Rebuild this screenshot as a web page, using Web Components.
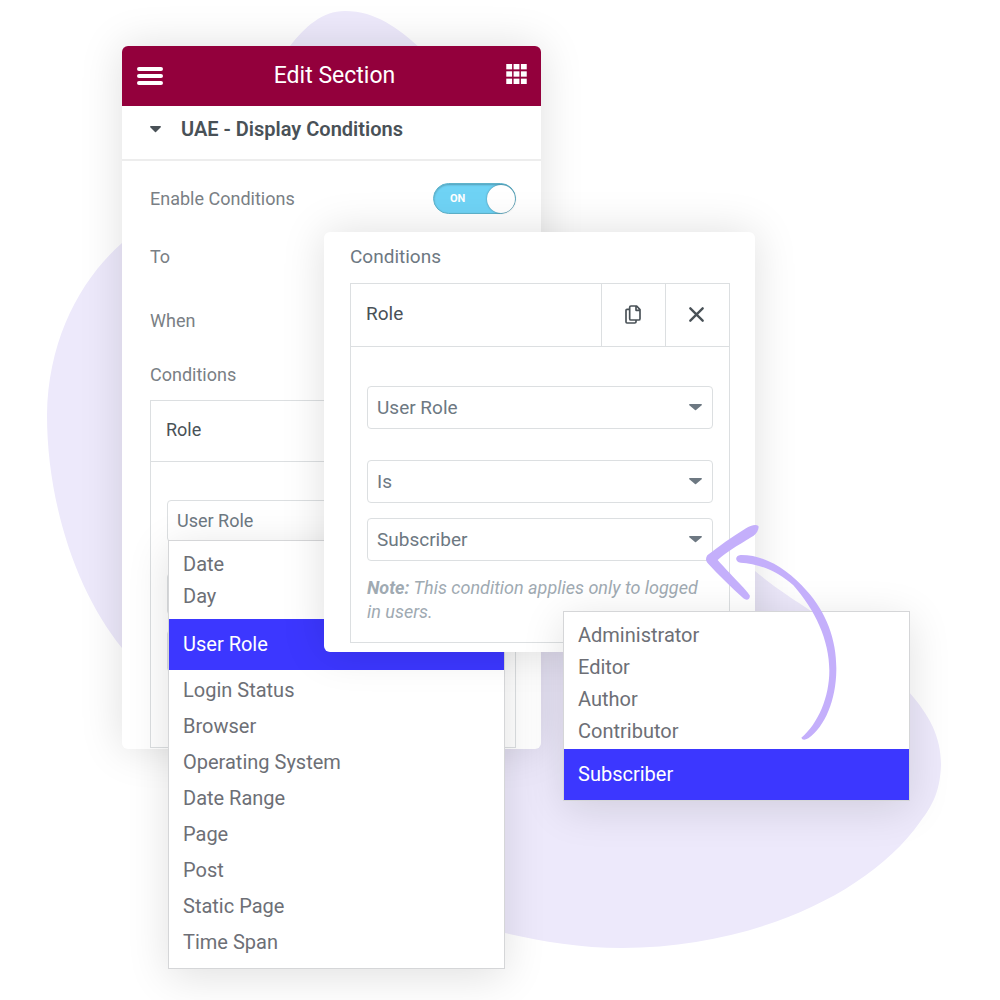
<!DOCTYPE html>
<html lang="en">
<head>
<meta charset="utf-8">
<meta name="viewport" content="width=device-width, initial-scale=1">
<title>Display Conditions</title>
<style>
    body {
        margin: 0;
        background: #fff;
        font-family: Roboto, "Liberation Sans", sans-serif;
        font-size: 19px;
        line-height: 24px;
        color: #6d7882;
    }
    .editor {
        margin-left: 12.2%;
        width: 41.9%;
        --text-size: 18px;
    }
    .editor condition-box {
        --head-height: 60px;
        --body-start: 38px;
        --body-end: 75px;
    }
    .editor select-field {
        --field-height: 42px;
    }
    .detail {
        left: 32.4%;
        top: 232px;
        width: 43.1%;
    }
    .types {
        left: 16.8%;
        top: 540px;
        width: 33.7%;
    }
    .roles {
        left: 56.3%;
        top: 611px;
        width: 34.7%;
    }
    /* windows laid over the editor panel */
    .detail, .types, .roles {
        position: absolute;
    }
</style>
</head>
<body>

<canvas-stage>
    <editor-panel class="editor" heading="Edit Section" section="UAE - Display Conditions">
        <toggle-row label="Enable Conditions" on></toggle-row>
        <setting-label class="to">To</setting-label>
        <setting-label class="when">When</setting-label>
        <setting-label class="conditions">Conditions</setting-label>
        <condition-box heading="Role">
            <select-field label="Condition" value="User Role"></select-field>
            <select-field class="spaced" label="Operator"></select-field>
            <select-field label="Role"></select-field>
        </condition-box>
    </editor-panel>

    <option-menu class="types" label="Condition type">
        <menu-option compact>Date</menu-option>
        <menu-option compact>Day</menu-option>
        <menu-option selected>User Role</menu-option>
        <menu-option>Login Status</menu-option>
        <menu-option>Browser</menu-option>
        <menu-option>Operating System</menu-option>
        <menu-option>Date Range</menu-option>
        <menu-option>Page</menu-option>
        <menu-option>Post</menu-option>
        <menu-option>Static Page</menu-option>
        <menu-option>Time Span</menu-option>
    </option-menu>

    <detail-card class="detail" heading="Conditions">
        <condition-box heading="Role" actions>
            <select-field label="Condition" value="User Role"></select-field>
            <select-field class="spaced" label="Operator" value="Is"></select-field>
            <select-field label="Role" value="Subscriber"></select-field>
            <note-text><b>Note:</b> This condition applies only to logged in users.</note-text>
        </condition-box>
    </detail-card>

    <option-menu class="roles" label="User role">
        <menu-option compact>Administrator</menu-option>
        <menu-option compact>Editor</menu-option>
        <menu-option compact>Author</menu-option>
        <menu-option compact>Contributor</menu-option>
        <menu-option selected>Subscriber</menu-option>
    </option-menu>
</canvas-stage>

<script>
class BaseElement extends HTMLElement {
    constructor() {
        super();
        this.attachShadow({ mode: 'open' });
    }

    connectedCallback() {
        const template = document.createElement('template');
        template.innerHTML = `<style>*{box-sizing:border-box}${this.constructor.style}</style>${this.html}`;
        this.shadowRoot.replaceChildren(template.content.cloneNode(true));
    }

    attr(name) {
        return this.getAttribute(name) || '';
    }
}

class CanvasStage extends BaseElement {
    get html() {
        return `
            <svg class="blob" viewBox="0 0 1000 1000" aria-hidden="true">
                <path fill="#ede9fb" d="M345 11C376 11 399 29 419 47C510 125 480 300 540 400C600 470 700 525 755 571C775 588 793 599 811 611C850 636 884 664 909 692C930 716 941 737 941 765C940 791 933 805 920 822C870 893 755 947 622 948C580 948 540 941 505 933C390 900 260 780 180 700C160 684 140 668 122 648C75 590 47 500 47 415C48 340 80 280 122 243C200 180 255 100 290 46C305 27 322 11 345 11Z"/>
            </svg>
            <slot></slot>
            <svg class="arrow" viewBox="495 72 396 654" fill="#c4affb" aria-hidden="true">
                <path d="M655 78C648 72 630 77 618 85C575 112 535 140 502 166Q494 178 502 188C535 225 575 262 610 295C620 303 632 298 629 286C620 270 570 222 533 180C560 155 620 120 640 108C652 100 658 84 655 78Z"/>
                <path d="M602 165C675 164 745 210 800 272C860 338 890 420 889 510C888 600 855 680 805 715Q788 724 784 713C835 670 868 590 868 512C868 420 825 330 760 256C715 215 655 190 602 188C584 186 584 166 602 165Z"/>
            </svg>
        `;
    }

    static style = `
        :host {
            display: block;
            position: relative;
            box-sizing: border-box;
            min-height: 1000px;
            padding-top: 46px;
            overflow: hidden;
        }
        svg { position: absolute; display: block; }
        .blob { left: 0; top: 0; width: 100%; }
        .arrow { left: 70.5%; top: 524px; width: 13.2%; }
    `;
}

class EditorPanel extends BaseElement {
    get html() {
        const steps = [0, 15, 30];
        const cells = steps.map(y => steps.map(x => `<path d="M${x} ${y}h12v11h-12z"/>`).join('')).join('');
        return `
            <header>
                <button aria-label="Menu">
                    <svg width="26" height="18" viewBox="0 0 26 18" fill="none" stroke="#fff" stroke-width="4" stroke-linecap="round">
                        <path d="M2 2H24M2 9H24M2 16H24"/>
                    </svg>
                </button>
                <h1>${this.attr('heading')}</h1>
                <button class="grid" aria-label="Widgets">
                    <svg width="21" height="20" viewBox="0 0 42 41" fill="#fff">${cells}</svg>
                </button>
            </header>
            <h2>
                <button aria-expanded="true">
                    <svg width="11" height="7" viewBox="0 0 11 7"><path fill="#495157" d="M1 0H10Q11 0 11 1L6 6Q5.500 6.500 5 6L0 1Q0 0 1 0Z"/></svg>
                    ${this.attr('section')}
                </button>
            </h2>
            <div class="controls"><slot></slot></div>
        `;
    }

    static style = `
        :host {
            display: block;
            position: relative;
            border-radius: 6px;
            background: #fff;
            box-shadow: 0 0 44px rgba(0, 0, 0, .13);
        }
        header {
            display: flex;
            align-items: center;
            justify-content: space-between;
            height: 60px;
            padding: 0 14px 0 15px;
            border-radius: 6px 6px 0 0;
            background: #93003c;
            color: #fff;
        }
        h1, h2 { margin: 0; }
        h1 { font-size: 23px; line-height: 28px; font-weight: 400; }
        h2 {
            padding: 11px 28px 18px;
            border-bottom: 2px solid #ededed;
        }
        button {
            display: flex;
            align-items: center;
            padding: 0;
            border: 0;
            background: none;
            color: #495157;
            font: 600 20px/24px Roboto, "Liberation Sans", sans-serif;
            cursor: pointer;
        }
        h2 button { gap: 20px; }
        header .grid { padding-bottom: 4px; }
        .controls {
            display: flex;
            flex-direction: column;
            padding: 22px 25px 1px 28px;
        }
        ::slotted(.to) { margin-top: 31px; }
        ::slotted(.when) { margin-top: 40px; }
        ::slotted(.conditions) { margin: 30px 0 13px; }
    `;
}

class SettingLabel extends BaseElement {
    get html() {
        return `<slot></slot>`;
    }

    static style = `
        :host { display: block; color: #7a7f85; font-size: var(--text-size, 19px); }
    `;
}

class ToggleRow extends BaseElement {
    get html() {
        return `
            <label for="toggle">${this.attr('label')}</label>
            <div class="track">
                <input id="toggle" type="checkbox" role="switch" ${this.hasAttribute('on') ? 'checked' : ''}>
                <span class="state">ON</span>
                <span class="knob"></span>
            </div>
        `;
    }

    static style = `
        :host {
            display: flex;
            align-items: center;
            justify-content: space-between;
            color: #7a7f85;
            font-size: var(--text-size, 19px);
        }
        .track {
            display: grid;
            align-items: center;
            width: 83px;
            height: 31px;
        }
        .track > * { grid-area: 1 / 1; }
        input {
            appearance: none;
            width: 100%;
            height: 100%;
            margin: 0;
            border: 1px solid #5fb3cb;
            border-radius: 16px;
            background: #6fd3f5;
            box-shadow: inset 0 1px 2px rgba(0, 0, 0, .25);
        }
        .state {
            padding-left: 17px;
            color: #fff;
            font-size: 11px;
            font-weight: 700;
            pointer-events: none;
        }
        .knob {
            justify-self: end;
            width: 28px;
            height: 28px;
            margin-right: 1px;
            border-radius: 50%;
            background: #fff;
            box-shadow: 0 0 2px rgba(0, 0, 0, .4);
            pointer-events: none;
        }
    `;
}

class DetailCard extends BaseElement {
    get html() {
        return `<h2>${this.attr('heading')}</h2><slot></slot>`;
    }

    static style = `
        :host {
            display: block;
            box-sizing: border-box;
            padding: 13px 25px 9px 26px;
            border-radius: 6px;
            background: #fff;
            box-shadow: 0 0 44px rgba(0, 0, 0, .13);
        }
        h2 { margin: 0 0 14px; font-size: 19px; font-weight: 400; }
    `;
}

class ConditionBox extends BaseElement {
    get html() {
        return `
            <div class="head">
                <h3>${this.attr('heading')}</h3>
                ${this.hasAttribute('actions') ? ConditionBox.actions : ''}
            </div>
            <div class="body"><slot></slot></div>
        `;
    }

    static actions = `
        <button aria-label="Duplicate">
            <svg width="16" height="19" viewBox="0 0 48 57" fill="none" stroke="#495157" stroke-width="5" stroke-linejoin="round">
                <path d="M18 3H35L45 14V41Q45 45 41 45H18Q14 45 14 41V7Q14 3 18 3ZM33 3V16H45"/>
                <path d="M14 13H6Q3 13 3 16V51Q3 54 6 54H29Q33 54 33 51V45"/>
            </svg>
        </button>
        <button aria-label="Remove">
            <svg width="15" height="15" viewBox="0 0 45 45" stroke="#495157" stroke-width="7" stroke-linecap="round">
                <path d="M4 4L41 41M41 4L4 41"/>
            </svg>
        </button>
    `;

    static style = `
        :host { display: block; border: 1px solid #dcdfe1; }
        .head {
            display: flex;
            height: var(--head-height, 62px);
        }
        h3 {
            flex: 1;
            align-self: center;
            margin: 0;
            padding: 0 0 2px 15px;
            color: #495157;
            font-size: var(--text-size, 19px);
            font-weight: 400;
        }
        button {
            display: grid;
            place-items: center;
            width: 64px;
            padding: 0 2px 2px 0;
            border: 0;
            border-left: 1px solid #dcdfe1;
            background: none;
            cursor: pointer;
        }
        .body {
            display: flex;
            flex-direction: column;
            gap: 15px;
            padding: var(--body-start, 39px) 16px var(--body-end, 18px);
            border-top: 1px solid #dcdfe1;
        }
        ::slotted(.spaced) { margin-top: 16px; }
    `;
}

class SelectField extends BaseElement {
    get html() {
        return `
            <select aria-label="${this.attr('label')}"><option>${this.attr('value')}</option></select>
            <svg width="13" height="7" viewBox="0 0 13 7" aria-hidden="true"><path fill="#6d7882" d="M1 0H12Q13 0 13 1L7 6Q6.500 6.500 6 6L0 1Q0 0 1 0Z"/></svg>
        `;
    }

    static style = `
        :host { display: grid; align-items: center; }
        select, svg { grid-area: 1 / 1; }
        select {
            appearance: none;
            width: 100%;
            height: var(--field-height, 43px);
            padding: 0 32px 0 9px;
            border: 1px solid #dcdfe1;
            border-radius: 4px;
            background: #fff;
            color: #6d7882;
            font: 400 var(--text-size, 19px)/24px Roboto, "Liberation Sans", sans-serif;
        }
        svg { justify-self: end; margin-right: 11px; pointer-events: none; }
    `;
}

class NoteText extends BaseElement {
    get html() {
        return `<slot></slot>`;
    }

    static style = `
        :host { display: block; font-size: 18px; font-style: italic; color: #a0aab2; }
    `;
}

class OptionMenu extends BaseElement {
    get html() {
        return `<div role="listbox" aria-label="${this.attr('label')}"><slot></slot></div>`;
    }

    static style = `
        :host {
            display: block;
            box-sizing: border-box;
            border: 1px solid #d5d6d8;
            background: #fff;
            box-shadow: 0 8px 40px rgba(0, 0, 0, .12);
        }
        div { display: flex; flex-direction: column; padding-top: 7px; }
        ::slotted([selected]) { margin: 7px 0 2px; }
        ::slotted([selected]:last-child) { margin: 2px 0 0; }
        ::slotted(:last-child:not([selected])) { margin-bottom: 8px; }
    `;
}

class MenuOption extends BaseElement {
    connectedCallback() {
        super.connectedCallback();
        this.setAttribute('role', 'option');
        this.setAttribute('aria-selected', this.hasAttribute('selected'));
    }

    get html() {
        return `<slot></slot>`;
    }

    static style = `
        :host {
            display: block;
            padding: 0 14px;
            color: #6d6f76;
            font-size: 20px;
            line-height: 36px;
        }
        :host([compact]) { line-height: 32px; }
        :host([selected]) { background: #3c37ff; color: #fff; line-height: 51px; }
    `;
}

customElements.define('canvas-stage', CanvasStage);
customElements.define('editor-panel', EditorPanel);
customElements.define('setting-label', SettingLabel);
customElements.define('toggle-row', ToggleRow);
customElements.define('detail-card', DetailCard);
customElements.define('condition-box', ConditionBox);
customElements.define('select-field', SelectField);
customElements.define('note-text', NoteText);
customElements.define('option-menu', OptionMenu);
customElements.define('menu-option', MenuOption);
</script>
</body>
</html>
